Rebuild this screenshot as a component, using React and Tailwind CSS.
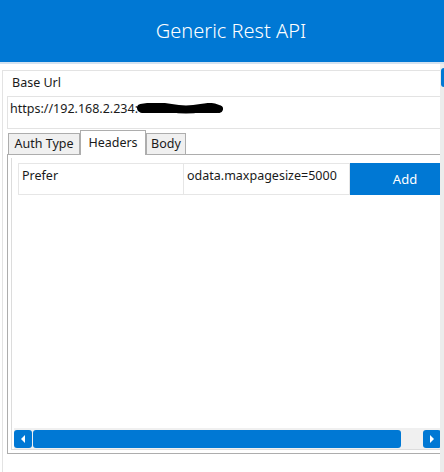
import React from 'react';

const FONT = { fontFamily: '"Noto Sans", "Open Sans", sans-serif' };

function Redacted() {
  return (
    <svg width="86" height="12" viewBox="0 0 86 12" className="inline-block -ml-[1px] mt-[3px]">
      <path d="M4 5 C 14 3, 24 3, 34 5 S 54 7, 64 5 S 76 4, 82 6" stroke="#000" strokeWidth="8" fill="none" strokeLinecap="round" />
      <path d="M5 7 L 80 7" stroke="#000" strokeWidth="6" strokeLinecap="round" />
    </svg>
  );
}

function Tab({ label, active, width }) {
  return (
    <div
      className={
        active
          ? 'h-[25px] bg-white border border-b-0 border-[#adadad] flex items-center justify-center text-[12.5px] text-[#1a1a1a] relative -mb-[1px] z-10'
          : 'h-[21px] bg-[#f0f0f0] border border-b-0 border-[#adadad] flex items-center justify-center text-[12.5px] text-[#1a1a1a]'
      }
      style={{ width }}
    >
      {label}
    </div>
  );
}

export default function App() {
  return (
    <div className="w-[444px] h-[472px] overflow-hidden bg-white" style={FONT}>
      {/* Header */}
      <header className="h-[62px] bg-[#0078d4] flex items-center justify-center">
        <h1 className="text-white text-[20px] font-light pl-[18px]">Generic Rest API</h1>
      </header>
      <div className="h-[2px] bg-[#d3e2f0]" />

      <div className="flex h-[408px]">
        <div className="w-[440px] overflow-hidden pt-[6px] pl-[2px]">
          <div className="w-[470px] h-full border-l border-t border-[#e3e3e3]">
            <div className="h-[25px] pl-[9px] pt-[3px] text-[12.5px] text-[#1a1a1a]">Base Url</div>

            {/* Url textbox */}
            <div className="ml-[4px] h-[33px] border border-[#e3e3e3] pl-[2px] pt-[3px] text-[12.5px] text-[#1a1a1a] flex items-start">
              <span>https://192.168.2.234:</span>
              <Redacted />
            </div>

            {/* Tabs */}
            <div className="ml-[5px] h-[25px] flex items-end">
              <Tab label="Auth Type" width={72} />
              <Tab label="Headers" active width={66} />
              <Tab label="Body" width={40} />
            </div>

            {/* Tab panel */}
            <div className="ml-[4px] h-[300px] border border-[#adadad] pt-[3px] pl-[3px] pb-[3px]">
              <div className="h-full border-l border-b border-[#dcdcdc] flex flex-col pt-[5px]">
                <div className="ml-[6px] flex h-[32px]">
                  <div className="w-[166px] border border-[#e6e6e6] pl-[3px] pt-[3px] text-[12.5px] text-[#1a1a1a]">Prefer</div>
                  <div className="w-[166px] border border-l-0 border-[#e6e6e6] pl-[3px] pt-[3px] text-[12.5px] text-[#1a1a1a]">odata.maxpagesize=5000</div>
                  <button className="w-[110px] bg-[#0078d4] text-white text-[13px] flex items-center justify-center pt-[1px]">Add</button>
                </div>
                <div className="flex-1" />
                {/* Horizontal scrollbar */}
                <div className="ml-[2px] h-[21px] bg-[#f0f0f0] flex items-center pt-[1px] pb-[1px]">
                  <div className="w-[18px] h-[18px] rounded-[3px] bg-[#0078d4] flex items-center justify-center">
                    <svg width="6" height="8" viewBox="0 0 6 8"><path d="M5 0 L1 4 L5 8 Z" fill="#fff" /></svg>
                  </div>
                  <div className="ml-[1px] w-[368px] h-[18px] rounded-[3px] bg-[#0078d4]" />
                  <div className="w-[22px]" />
                  <div className="w-[18px] h-[18px] rounded-[3px] bg-[#0078d4] flex items-center justify-center">
                    <svg width="6" height="8" viewBox="0 0 6 8"><path d="M1 0 L5 4 L1 8 Z" fill="#fff" /></svg>
                  </div>
                </div>
              </div>
            </div>
          </div>
        </div>

        {/* Vertical scrollbar */}
        <div className="w-[4px] bg-[#ececec] pt-[4px]">
          <div className="h-[19px] bg-[#0078d4] rounded-l-[3px] ml-[1px]" />
        </div>
      </div>
    </div>
  );
}
